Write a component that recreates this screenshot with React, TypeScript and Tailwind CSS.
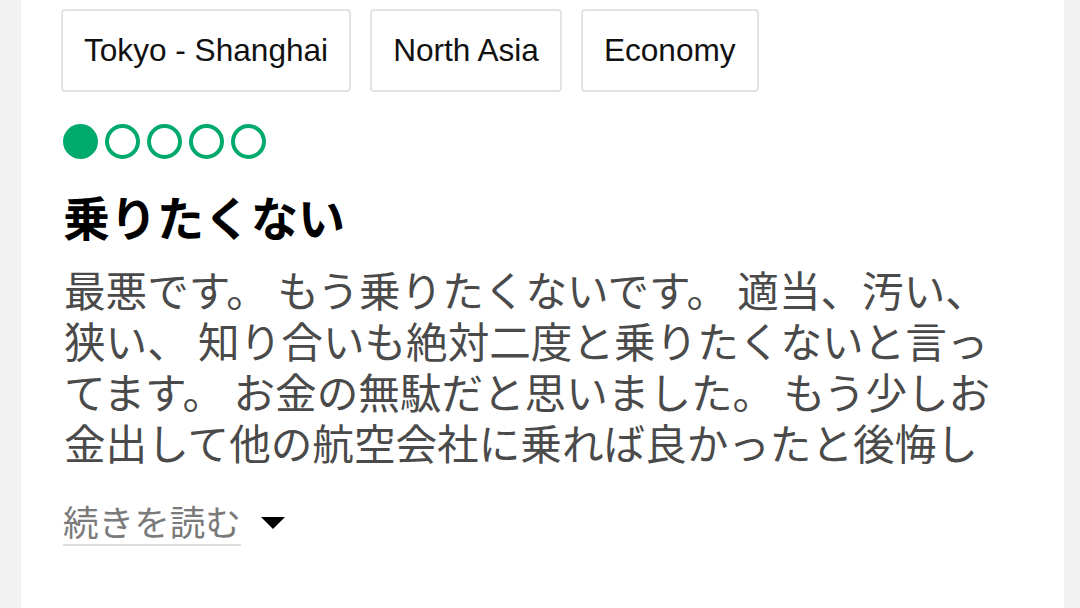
const tags = ["Tokyo - Shanghai", "North Asia", "Economy"];

const lines = [
  "最悪です。 もう乗りたくないです。 適当、汚い、",
  "狭い、 知り合いも絶対二度と乗りたくないと言っ",
  "てます。 お金の無駄だと思いました。 もう少しお",
  "金出して他の航空会社に乗れば良かったと後悔し",
];

function Bubble({ filled }: { filled: boolean }) {
  return (
    <svg width="35" height="35" viewBox="0 0 35 35">
      <circle
        cx="17.5"
        cy="17.5"
        r={filled ? 17.5 : 15.5}
        fill={filled ? "#00aa6c" : "none"}
        stroke={filled ? "none" : "#00aa6c"}
        strokeWidth={4}
      />
    </svg>
  );
}

export default function App() {
  return (
    <div className="flex h-[608px] w-[1080px] overflow-hidden bg-[#f2f2f2]">
      <div className="ml-[21px] w-[1043px] bg-white pl-[40px] pt-[9px]">
        <div className="flex gap-[19px]">
          {tags.map((t) => (
            <div
              key={t}
              className="flex h-[83px] items-center rounded-[4px] border-2 border-[#e3e3e3] px-[21px] font-['Liberation_Sans',Arial,sans-serif] text-[31.6px] text-[#111]"
            >
              {t}
            </div>
          ))}
        </div>

        <div className="mt-[32px] flex gap-[7px] pl-[2px]">
          {[0, 1, 2, 3, 4].map((i) => (
            <Bubble key={i} filled={i < 1} />
          ))}
        </div>

        <h2 className="mt-[27px] pl-[2px] font-['Noto_Sans_CJK_JP',sans-serif] text-[47px] font-bold leading-[60px] text-black">
          乗りたくない
        </h2>

        <div className="mt-[18px] pl-[3px] font-['Noto_Sans_CJK_JP',sans-serif] text-[41.6px] leading-[51px] text-[#4a4a4a]">
          {lines.map((l) => (
            <div key={l} className="whitespace-nowrap">
              {l}
            </div>
          ))}
        </div>

        <div className="mt-[29px] flex items-center gap-[20px] pl-[2px]">
          <span className="border-b-2 border-[#dcdcdc] font-['Noto_Sans_CJK_JP',sans-serif] text-[35.6px] leading-[47px] text-[#7a7a7a]">
            続きを読む
          </span>
          <svg width="24" height="12" viewBox="0 0 24 12" className="mt-[2px]">
            <path d="M0 0 L24 0 L12 12 Z" fill="#000" />
          </svg>
        </div>
      </div>
    </div>
  );
}
